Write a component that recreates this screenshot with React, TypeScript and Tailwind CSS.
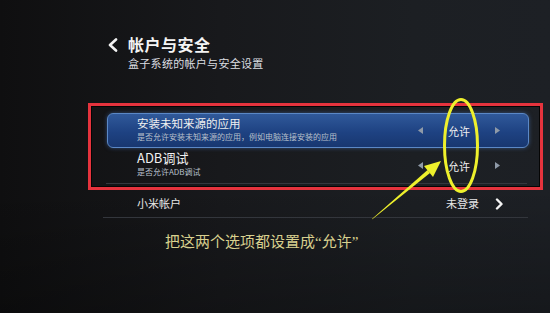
import React from "react";

const font = { fontFamily: '"Noto Sans CJK SC", "Noto Sans", sans-serif' } as const;

function LeftTri() {
  return (
    <svg width="5" height="7" viewBox="0 0 5 7" className="block">
      <path d="M5 0 L0 3.5 L5 7 Z" fill="#8f9aa8" />
    </svg>
  );
}
function RightTri() {
  return (
    <svg width="5" height="7" viewBox="0 0 5 7" className="block">
      <path d="M0 0 L5 3.5 L0 7 Z" fill="#8f9aa8" />
    </svg>
  );
}

function Row({
  title,
  sub,
  active,
  titleSize,
}: {
  title: string;
  sub: string;
  active?: boolean;
  titleSize: string;
}) {
  return (
    <div
      className={
        "h-[35px] flex items-start pl-[29px] pr-[28px] rounded-[6px] " +
        (active
          ? "border border-[#5b88c6] bg-[linear-gradient(to_bottom,#30599a,#1e4282_55%,#183770)] shadow-[0_0_4px_rgba(80,130,210,0.5)]"
          : "border border-transparent")
      }
    >
      <div className="flex flex-col pt-[1px] flex-1">
        <div className={"leading-[16px] text-[#f0f0f0] " + titleSize}>{title}</div>
        <div className="text-[8px] leading-[12px] text-[#b8c0cc] whitespace-nowrap">{sub}</div>
      </div>
      <div className="self-center flex items-center">
        <LeftTri />
        <div className="w-[72px] text-center text-[11px] leading-[14px] text-[#f0f0f0]">允许</div>
        <RightTri />
      </div>
    </div>
  );
}

export default function App() {
  return (
    <div
      className="relative w-[550px] h-[313px] overflow-hidden bg-[linear-gradient(to_right,#0f0f10,#18191c_40%,#1c1f23_75%,#1d2025)]"
      style={font}
    >
      <div className="absolute inset-0 bg-[linear-gradient(to_bottom,rgba(0,0,0,0)_60%,rgba(0,0,0,0.25))]" />
      <div className="relative">
        {/* Header */}
        <div className="flex items-start pt-[33px] pl-[107px]">
          <svg width="12" height="14" viewBox="0 0 12 14" className="mt-[5px]">
            <path d="M9 1.5 L3 7 L9 12.5" fill="none" stroke="#f2f2f2" strokeWidth="2.6" strokeLinecap="round" strokeLinejoin="round" />
          </svg>
          <div className="ml-[9px] flex flex-col">
            <div className="text-[16px] leading-[22px] font-bold text-[#f4f4f4] tracking-[0.5px]">帐户与安全</div>
            <div className="text-[11px] leading-[16px] text-[#dcdee2] tracking-[0.3px]">盒子系统的帐户与安全设置</div>
          </div>
        </div>

        {/* Red annotated box */}
        <div className="ml-[88px] mt-[32px] w-[455px] h-[87px] border-[3px] border-[#e5333d] shadow-[inset_0_0_0_1px_#050505] pt-[7px] pl-[16px] pr-[11px]">
          <Row title="安装未知来源的应用" sub="是否允许安装未知来源的应用，例如电脑连接安装的应用" active titleSize="text-[11.5px]" />
          <Row title="ADB调试" sub="是否允许ADB调试" titleSize="text-[13px]" />
          <div className="h-px bg-[#34373d] ml-[-1px] mr-[2px]" />
        </div>

        {/* Xiaomi account row */}
        <div className="ml-[103px] w-[425px] h-[28px] flex items-center pl-[34px] pr-[24px] border-b border-[#33363c]">
          <div className="flex-1 text-[11px] text-[#e6e6e6]">小米帐户</div>
          <div className="text-[11px] text-[#e6e6e6]">未登录</div>
          <svg width="9" height="12" viewBox="0 0 9 12" className="ml-[16px]">
            <path d="M2 1.5 L6.5 6 L2 10.5" fill="none" stroke="#f4f4f4" strokeWidth="2.4" strokeLinecap="round" strokeLinejoin="round" />
          </svg>
        </div>

        {/* Annotation text */}
        <div className="ml-[165px] mt-[14px] text-[15px] leading-[18px] text-[#d8d08e]">
          把这两个选项都设置成<span style={{ fontFamily: '"Liberation Serif", serif' }}>“</span>允许<span style={{ fontFamily: '"Liberation Serif", serif' }}>”</span>
        </div>
      </div>

      {/* Ellipse & arrow overlay */}
      <svg className="absolute inset-0 pointer-events-none" width="550" height="313" viewBox="0 0 550 313">
        <ellipse cx="461" cy="145.5" rx="16.5" ry="46" fill="none" stroke="#eef02c" strokeWidth="3" />
        <polygon points="372,219.5 372.8,218.3 427.5,170 430,173" fill="#eef02c" />
        <polygon points="441,161 424,166 433,177" fill="#eef02c" />
      </svg>
    </div>
  );
}
